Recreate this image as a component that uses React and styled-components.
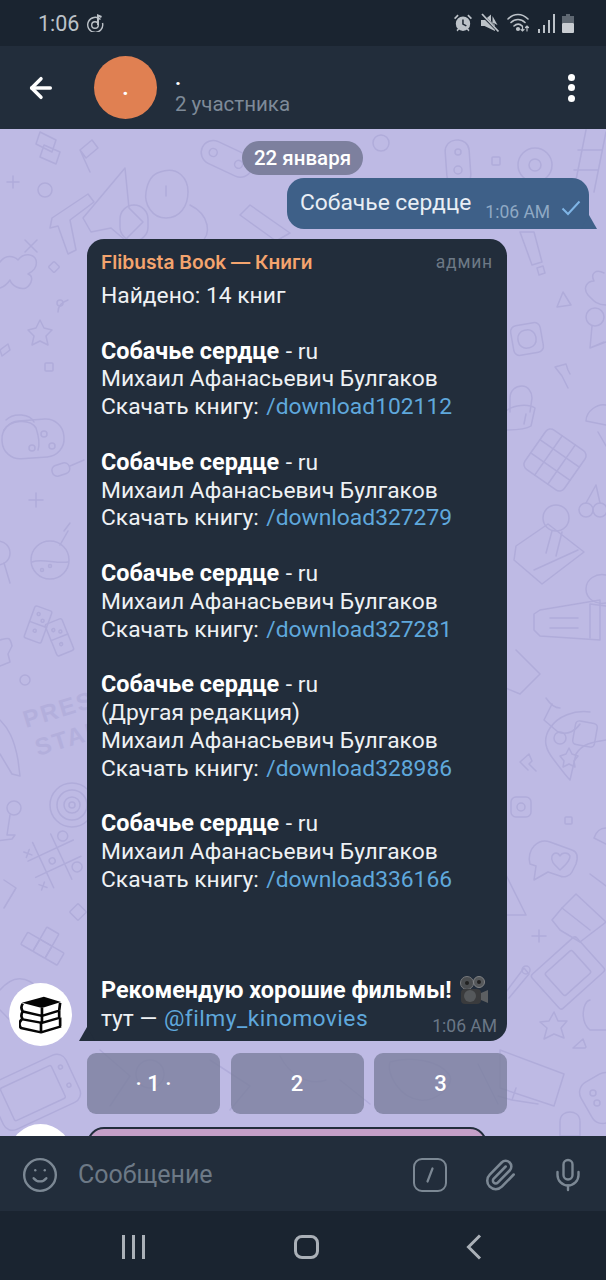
import React from "react";
import styled, { createGlobalStyle } from "styled-components";
import { ArrowLeft, Paperclip, Mic, Smile } from "lucide-react";

const GlobalStyle = createGlobalStyle`
  html, body {
    margin: 0;
    padding: 0;
    background: #bebae4;
    font-family: Roboto, "Noto Sans", sans-serif;
  }
`;

const results = [
  { id: "102112" },
  { id: "327279" },
  { id: "327281" },
  { id: "328986", note: "(Другая редакция)" },
  { id: "336166" },
];

const Doodles = () => (
  <DoodleSvg viewBox="0 129 606 1007" fill="none" stroke="#b0acda" strokeWidth="1.5" strokeLinejoin="round" strokeLinecap="round">
    {/* top band */}
    <g transform="rotate(25 225 158)">
      <rect x="200" y="146" width="54" height="24" rx="12" />
      <circle cx="212" cy="158" r="4" /><circle cx="240" cy="158" r="4" />
    </g>
    <circle cx="381" cy="143" r="8" />
    <rect x="446" y="140" width="24" height="46" rx="11" transform="rotate(-4 458 163)" />
    <circle cx="458" cy="152" r="3" /><circle cx="458" cy="170" r="4" />
    <rect x="492" y="157" width="8" height="8" rx="1" />
    <circle cx="535" cy="165" r="17" /><circle cx="535" cy="165" r="6" />
    <path d="M520 180l-12 12M586 130l-12 60M606 132l-12 60" />
    <path d="M578 150h24M574 170h24" />
    <path d="M40 132l16 8-4 12-16-8zM44 145l-4 12 16 7 4-12z" />
    <path d="M80 150l12-10 6 8-12 10zM80 150l10 22" />
    <path d="M13 176v12M7 182h12" />
    <circle cx="45" cy="190" r="7" />
    <path d="M52 218l36-24 6 8-24 18 6 30-8 4-10-28-8 2z" />
    <path d="M125 168l-42 50 8 14 20-4 14 12 18-18-14-14z" />
    <path d="M160 172c18-6 28 6 28 20s-8 26-22 26-22-14-20-26 6-18 14-20zM166 186v10" />
    <path d="M190 205c20 10 22 30 10 38" />
    <rect x="120" y="205" width="28" height="36" rx="14" />
    <path d="M250 205l40 28-14 8-36-26z" />
    {/* left margin */}
    <path d="M25 240l12 12M37 240l-12 12" />
    <rect x="50" y="263" width="8" height="8" rx="1" transform="rotate(45 54 267)" />
    <path d="M0 262c6-8 14-6 18-2 6-8 16-6 18 0 2 8-4 12-8 14 6 2 4 10-2 14-6 2-14-2-16-8-4 6-10 8-10 8" />
    <path d="M68 300c-6 2-10 6-10 12" />
    <circle cx="60" cy="303" r="3" />
    <path d="M40 320l4 8 8 2-6 6 2 9-8-4-8 4 2-9-6-6 8-2z" />
    <rect x="45" y="363" width="8" height="8" rx="1" />
    <path d="M0 350l8-6 2 6-8 6z" />
    <path d="M4 430c6-10 26-12 32-2 2 6 4 16 2 22M6 420c8-8 24-6 28 2" />
    <rect x="2" y="420" width="62" height="38" rx="18" transform="rotate(-4 32 439)" />
    <circle cx="44" cy="434" r="3" /><circle cx="52" cy="446" r="3" /><circle cx="32" cy="448" r="3" />
    <rect x="52" y="464" width="18" height="11" rx="5" transform="rotate(-18 61 470)" />
    <path d="M70 466l14-6M36 493v14M29 500h14" />
    <circle cx="50" cy="560" r="19" />
    <path d="M60 545l8-14M64 531l6-8M32 562c10-4 24 2 36 0" />
    <circle cx="42" cy="570" r="1.500" /><circle cx="50" cy="566" r="1.500" />
    <circle cx="-2" cy="553" r="12" />
    <path d="M4 563l6 20" />
    <g transform="rotate(20 40 622)">
      <rect x="30" y="608" width="18" height="34" rx="2" />
      <path d="M30 625h18" />
      <circle cx="36" cy="615" r="1.500" /><circle cx="42" cy="620" r="1.500" /><circle cx="38" cy="632" r="1.500" />
    </g>
    <g transform="rotate(-22 60 636)">
      <rect x="50" y="620" width="18" height="34" rx="2" />
      <path d="M50 637h18" />
      <circle cx="56" cy="628" r="1.500" /><circle cx="62" cy="632" r="1.500" /><circle cx="58" cy="644" r="1.500" />
    </g>
    <path d="M0 640c8-2 10-4 12 6l-4 8 2 8-10 4" />
    <circle cx="25" cy="680" r="5" />
    <path d="M0 720c8 8 14 18 18 40l2 16-8-2-12-20" />
    <PressText x="26" y="728" transform="rotate(-17 26 728)">PRESS</PressText>
    <PressText x="38" y="756" transform="rotate(-17 38 756)">START</PressText>
    <circle cx="72" cy="805" r="22" /><circle cx="72" cy="805" r="15" /><circle cx="72" cy="805" r="8" /><circle cx="72" cy="805" r="3" />
    <circle cx="14" cy="808" r="7" />
    <path d="M10 815l-3 20h8l-3 4-16 2" />
    <g transform="rotate(-25 54 860)">
      <path d="M42 835v50M62 835v50M30 850h50M30 868h50" />
      <circle cx="72" cy="842" r="5" /><circle cx="52" cy="860" r="3" /><circle cx="72" cy="876" r="5" />
      <path d="M30 840l6 6M36 840l-6 6M30 876l6 6M36 876l-6 6" />
    </g>
    <rect x="72" y="906" width="12" height="12" rx="1" transform="rotate(-45 78 912)" />
    <path d="M4 880l12 8-12 20" />
    <g transform="rotate(30 48 945)">
      <rect x="38" y="930" width="14" height="14" rx="1" />
      <rect x="38" y="944" width="14" height="14" rx="1" />
      <rect x="24" y="944" width="14" height="14" rx="1" />
      <rect x="52" y="944" width="14" height="14" rx="1" />
    </g>
    <path d="M0 990c12-14 26-16 40 0M0 1010c8 8 14 14 20 22" />
    <g transform="rotate(-25 36 1095)">
      <rect x="-6" y="1066" width="84" height="52" rx="10" />
      <rect x="6" y="1074" width="56" height="36" rx="2" />
      <circle cx="70" cy="1080" r="2" /><circle cx="70" cy="1100" r="2" />
    </g>
    {/* right margin */}
    <path d="M520 232l14 0 8 30-10 3zM537 268l6-2 2 7-6 2z" />
    <path d="M563 292l8 13-14 2z" />
    <rect x="512" y="324" width="30" height="30" rx="6" transform="rotate(-10 527 339)" />
    <rect x="518" y="330" width="18" height="18" rx="8" transform="rotate(-10 527 339)" />
    <path d="M562 376l6 12M562 376l-7-9 11-3 2 6 2 4" />
    <path d="M510 412v-14c0-8 6-12 12-12s10 6 10 12l-2 14M505 412c8-8 24-8 30-4l-4 18c-6 4-22 4-26 4z" />
    <path d="M526 414l-2 10" />
    <g transform="rotate(35 555 460)">
      <rect x="531" y="436" width="48" height="48" rx="6" />
      <path d="M531 452h48M531 468h48M547 436v48M563 436v48" />
    </g>
    <circle cx="556" cy="518" r="13" />
    <path d="M552 531l-6 22M562 532l-6 24" />
    <path d="M516 546l32-22 36 28-42 32-28-24zM534 570l44-20" />
    <circle cx="586" cy="510" r="7" /><circle cx="600" cy="510" r="7" /><path d="M586 503l10-18M600 503l-4-18" />
    <path d="M540 610l60-10v40l-60-4-6-6v-16z" />
    <path d="M550 618h28M550 628h28M590 604l16 2M590 604v34" />
    <path d="M606 305c-10 0-14-6-18-10-6-8 0-14 6-14-4-8 2-12 10-8" />
    <circle cx="595" cy="317" r="9" />
    <path d="M592 326l-2 22 14-6M606 342l-16 6" />
    <path d="M606 405c-8-2-20 6-20 16l20 4M598 432l8 14" />
    <path d="M516 650l24 24-20 20-24-10" />
    <path d="M560 708c-6 0-10-4-14-10M606 575c-10-2-20 4-20 14 0 10 10 16 20 14" />
    <path d="M552 704l-8 16 14 12c10 4 18-2 22-8" />
    <path d="M590 712c-16-2-32 4-40 16-8 12-4 22 4 32 6 8 12 16 16 20l6-26c6-10 16-12 30-14" />
    <rect x="574" y="722" width="22" height="24" rx="4" transform="rotate(10 585 734)" />
    <circle cx="560" cy="738" r="6" />
    <path d="M569 748l3 6 6 2-4 5 1 6-6-3-6 3 1-6-4-5 6-2z" />
    <path d="M528 770l-8-8 9-8 3 7-3 3 7 7" />
    <rect x="511" y="797" width="20" height="20" rx="5" /><circle cx="521" cy="807" r="4" />
    <rect x="565" y="817" width="7" height="7" rx="1" />
    <path d="M606 828c-6 0-10 4-12 10l12 6" />
    <path d="M550 842l22 8c6 2 6 8 4 14l-4 8c-2 4-8 6-12 4l-12-4-14 8 2-14-6-2c-2-6 0-14 4-18 4-4 10-6 16-4z" />
    <path d="M560 870c-4-4-10-8-8-14 2-4 6-4 8 0 2-4 8-4 10 0 0 6-6 10-10 14z" />
    <path d="M506 875l20 40h-20" />
    <path d="M532 936l14 0M539 930v12" />
    <path d="M562 908l14-14 30 28-26 20-20-12-8-10z" />
    <path d="M562 908l28 22M590 874l16 12" />
    <g transform="rotate(-42 568 973)">
      <rect x="538" y="950" width="60" height="46" rx="3" />
      <rect x="550" y="958" width="36" height="30" rx="2" />
    </g>
    <path d="M506 992l18-24 5 6-20 24" />
    <circle cx="526" cy="970" r="4" />
    <path d="M554 1012l4 9 9 0-6 7 3 10-10-4-10 5 3-11-7-6 9-1z" />
    <path d="M585 1048l-12 0 10-9 3 8z" />
    <path d="M500 1050l64 24-10 32-54-18zM516 1088l-4 12 26 4M512 1100l-14-4" />
    <rect x="584" y="1075" width="40" height="46" rx="12" transform="rotate(-30 604 1098)" />
    <circle cx="593" cy="1093" r="3" /><circle cx="597" cy="1103" r="3" />
    <path d="M560 1122c0-8 6-10 10-10s10 2 10 10v14h-20z" />
    <path d="M590 1000c-8 2-10 22 0 30h16" />
    {/* behind the keyboard */}
    <circle cx="150" cy="1074" r="14" />
    <path d="M100 1050l30 26-20 30M210 1060l40 26-20 24M280 1056c10 20 30 30 46 24M340 1080l30 24" />
    <path d="M390 1062c20-6 50-2 60 14 4 10-14 26-30 24-20-2-34-26-30-38z" />
    <path d="M478 1064l20 40" />
  </DoodleSvg>
);

const AlarmIcon = () => (
  <svg width="20" height="20" viewBox="0 0 20 20" fill="#bcc2c8">
    <path fillRule="evenodd" d="M10 3.500a7.200 7.200 0 1 1 0 14.400 7.200 7.200 0 0 1 0-14.400zM9.200 6.500v5l3.800 2 .7-1.200-3-1.600V6.500z" />
    <path d="M1 5l3.500-3.500 1.200 1.200L2.200 6.200zM19 5l-3.500-3.500-1.200 1.200 3.500 3.500zM3.500 17l2-2 1 1-2 2.500zM16.500 17l-2-2-1 1 2 2.500z" />
  </svg>
);

const MuteIcon = () => (
  <svg width="20" height="20" viewBox="0 0 20 20" fill="#bcc2c8">
    <path d="M1 7h3.500L11 1.500v6.700L15 12v6L4.500 13H1zM12.500 9.500V3l5 9z" />
    <path d="M1.500 1.500l17 17" stroke="#1a2430" strokeWidth="2.500" />
    <path d="M2 1l16.500 17.500" stroke="#bcc2c8" strokeWidth="1.800" />
  </svg>
);

const WifiIcon = () => (
  <svg width="24" height="20" viewBox="0 0 24 20" fill="none" stroke="#bcc2c8" strokeWidth="1.600" strokeLinecap="round">
    <path d="M1 6c6-6 14-6 20 0M4 9.500c4-4 10-4 14 0M7 13c2.500-2.500 6-2.500 8 0" />
    <circle cx="11" cy="16" r="1.300" fill="#bcc2c8" />
    <path d="M15.500 13v5M14 16.500l1.500 1.500 1.500-1.500M20 18v-5M18.500 14.500L20 13l1.500 1.500" strokeWidth="1.200" />
  </svg>
);

const SignalIcon = () => (
  <svg width="17" height="19" viewBox="0 0 17 19" fill="#bcc2c8">
    <rect x="0" y="15" width="2" height="4" />
    <rect x="5" y="11" width="2" height="8" />
    <rect x="10" y="6" width="2" height="13" />
    <rect x="15" y="0" width="2" height="19" />
  </svg>
);

const BatteryIcon = () => (
  <svg width="12" height="19" viewBox="0 0 12 19">
    <path d="M4 0h4v2h4v7H0V2h4z" fill="#5f6872" />
    <rect x="0" y="9" width="12" height="10" rx="1" fill="#c9cdd2" />
  </svg>
);

const NoteIcon = () => (
  <svg width="18" height="18" viewBox="0 0 18 18" fill="none" stroke="#bcc2c8" strokeWidth="1.400">
    <path d="M14.500 5.500A7.500 7.500 0 1 0 16.500 9" />
    <circle cx="9" cy="11" r="3.300" />
    <path d="M12 11V1.500l3.500 1.500" strokeWidth="2" />
  </svg>
);

const BooksIcon = () => (
  <svg width="44" height="40" viewBox="0 0 46 46" preserveAspectRatio="none">
    <path d="M3 9l23-7 18 6-20 7z" fill="#050505" />
    <g fill="none" stroke="#050505" strokeWidth="2.800" strokeLinejoin="round">
      <path d="M4 10c-2 3-2 6 0 9l20 5 18-6M24 15v9M43 9l-1 9" />
      <path d="M4 19c-2 3-2 6 0 9l20 4 19-6M24 24v8M42 18v8" />
      <path d="M3 28c-3 3-3 7-1 10l21 5 21-7M23 32v11M43 26v10" />
    </g>
  </svg>
);

const MovieCameraIcon = () => (
  <svg width="30" height="29" viewBox="0 0 30 29">
    <circle cx="8" cy="7" r="6.500" fill="#4a4d50" stroke="#77797c" />
    <circle cx="20" cy="6" r="5.500" fill="#55585b" stroke="#808285" />
    <circle cx="8" cy="7" r="2" fill="#222" />
    <circle cx="20" cy="6" r="2" fill="#222" />
    <rect x="2" y="13" width="20" height="15" rx="4" fill="#3a3b3d" />
    <circle cx="11" cy="20" r="6" fill="#55585b" />
    <path d="M22 17l7-3v13l-7-3z" fill="#5c5f62" />
  </svg>
);

const SlashBox = () => (
  <SlashFrame>
    <svg width="10" height="16" viewBox="0 0 10 16" fill="none" stroke="#7c8894" strokeWidth="2.200" strokeLinecap="round">
      <path d="M7.500 1.500l-5 13" />
    </svg>
  </SlashFrame>
);

const MessageResult = ({ id, note }) => (
  <Block>
    <Line>
      <b>Собачье сердце</b> - ru
    </Line>
    {note && <Line>{note}</Line>}
    <Line>Михаил Афанасьевич Булгаков</Line>
    <Line>
      Скачать книгу: <DownloadLink>/download{id}</DownloadLink>
    </Line>
  </Block>
);

const App = () => (
  <Page>
    <GlobalStyle />
    <StatusBar>
      <StatusLeft>
        <span>1:06</span>
        <NoteIcon />
      </StatusLeft>
      <StatusRight>
        <AlarmIcon />
        <MuteIcon />
        <WifiIcon />
        <SignalIcon />
        <BatteryIcon />
      </StatusRight>
    </StatusBar>

    <Header>
      <ArrowLeft size={32} color="#ffffff" strokeWidth={2.6} />
      <ChatAvatar>.</ChatAvatar>
      <HeaderText>
        <ChatTitle>.</ChatTitle>
        <ChatSub>2 участника</ChatSub>
      </HeaderText>
      <MenuDots>
        <i />
        <i />
        <i />
      </MenuDots>
    </Header>

    <Chat>
      <Doodles />
      <DatePill>22 января</DatePill>
      <OutRow>
        <OutBubble>
          <OutText>Собачье сердце</OutText>
          <OutTime>1:06 AM</OutTime>
          <svg width="20" height="16" viewBox="0 0 20 16" fill="none" stroke="#7fb5e6" strokeWidth="2">
            <path d="M1.500 8.500l5.500 5.500L18.500 1.500" />
          </svg>
        </OutBubble>
      </OutRow>
      <InRow>
        <Avatar>
          <BooksIcon />
        </Avatar>
        <InBubble>
          <BubbleHead>
            <Sender>Flibusta Book — Книги</Sender>
            <Role>админ</Role>
          </BubbleHead>
          <Block>
            <Line>Найдено: 14 книг</Line>
          </Block>
          {results.map((r) => (
            <MessageResult key={r.id} id={r.id} note={r.note} />
          ))}
          <Promo>
            <Line>
              <b>Рекомендую хорошие фильмы!</b>
              <MovieCameraIcon />
            </Line>
            <Line>
              тут — <ChannelLink>@filmy_kinomovies</ChannelLink>
            </Line>
            <InTime>1:06 AM</InTime>
          </Promo>
        </InBubble>
      </InRow>
      <Keyboard>
        <KeyButton>· 1 ·</KeyButton>
        <KeyButton>2</KeyButton>
        <KeyButton>3</KeyButton>
      </Keyboard>
      <InRow>
        <Avatar />
        <PinkBubble />
      </InRow>
    </Chat>

    <Composer>
      <Smile size={38} color="#7c8894" strokeWidth={1.5} />
      <Placeholder>Сообщение</Placeholder>
      <SlashBox />
      <Paperclip size={34} color="#7c8894" strokeWidth={1.8} />
      <MicSlot>
        <Mic size={36} color="#7c8894" strokeWidth={1.6} />
      </MicSlot>
    </Composer>

    <NavBar>
      <svg width="26" height="24" viewBox="0 0 26 24" fill="#aab0b7">
        <rect x="1" y="0" width="3" height="24" />
        <rect x="11" y="0" width="3" height="24" />
        <rect x="21" y="0" width="3" height="24" />
      </svg>
      <HomeKey />
      <svg width="16" height="26" viewBox="0 0 16 26" fill="none" stroke="#aab0b7" strokeWidth="3">
        <path d="M14 1.500L2.500 13 14 24.500" />
      </svg>
    </NavBar>
  </Page>
);

export default App;

const Page = styled.div`
  width: 606px;
  height: 1280px;
  display: flex;
  flex-direction: column;
  overflow: hidden;
  background: #bebae4;
`;

const StatusBar = styled.div`
  height: 46px;
  flex: none;
  background: #1a2430;
  display: flex;
  align-items: center;
  justify-content: space-between;
  padding: 0 32px 0 38px;
`;

const StatusLeft = styled.div`
  display: flex;
  align-items: center;
  gap: 7px;
  color: #bcc2c8;
  font-size: 21.5px;
`;

const StatusRight = styled.div`
  display: flex;
  align-items: center;
  gap: 7px;
`;

const Header = styled.div`
  height: 83px;
  flex: none;
  background: #222d3b;
  display: flex;
  align-items: center;
  padding: 0 31px 0 25px;
`;

const ChatAvatar = styled.div`
  width: 63px;
  height: 63px;
  margin-left: 37px;
  border-radius: 50%;
  background: #e08052;
  color: #ffffff;
  font-size: 22px;
  font-weight: 700;
  display: flex;
  align-items: center;
  justify-content: center;
`;

const HeaderText = styled.div`
  flex: 1;
  margin-left: 18px;
  display: flex;
  flex-direction: column;
  padding-top: 6px;
`;

const ChatTitle = styled.div`
  color: #ffffff;
  font-size: 21px;
  font-weight: 700;
  line-height: 26px;
`;

const ChatSub = styled.div`
  color: #7e8a98;
  font-size: 20.5px;
  line-height: 26px;
`;

const MenuDots = styled.div`
  display: flex;
  flex-direction: column;
  gap: 3.5px;

  i {
    display: block;
    width: 7px;
    height: 7px;
    border-radius: 50%;
    background: #ffffff;
  }
`;

const Chat = styled.div`
  height: 1007px;
  flex: none;
  position: relative;
  overflow: hidden;
  display: flex;
  flex-direction: column;
  padding-top: 12px;
  box-sizing: border-box;

  > * {
    flex: none;
  }
`;

const DoodleSvg = styled.svg`
  position: absolute;
  inset: 0;
  width: 606px;
  height: 1007px;
`;

const PressText = styled.text`
  font-family: "Liberation Sans", sans-serif;
  font-size: 24px;
  font-weight: 700;
  letter-spacing: 2px;
  fill: #b3afdc;
  stroke: none;
`;

const DatePill = styled.div`
  position: relative;
  align-self: flex-start;
  margin-left: 242px;
  width: 121px;
  height: 34px;
  border-radius: 17px;
  background: #7d809e;
  color: #ffffff;
  font-size: 20.5px;
  font-weight: 500;
  display: flex;
  align-items: center;
  justify-content: center;
`;

const OutRow = styled.div`
  position: relative;
  display: flex;
  justify-content: flex-end;
  padding-right: 17px;
  margin-top: 3px;
`;

const OutBubble = styled.div`
  position: relative;
  width: 302px;
  height: 51px;
  box-sizing: border-box;
  padding: 0 10px 0 13px;
  border-radius: 17px 17px 4px 17px;
  background: #3e6088;
  display: flex;
  align-items: center;
  white-space: nowrap;

  &::after {
    content: "";
    position: absolute;
    right: -8px;
    bottom: 0;
    width: 16px;
    height: 14px;
    background: #3e6088;
    clip-path: polygon(50% 0, 100% 100%, 0 100%);
  }

  svg {
    flex: none;
    margin: 9px 0 0 11px;
  }
`;

const OutText = styled.span`
  color: #e8eef5;
  font-size: 22.8px;
  margin-top: -2px;
`;

const OutTime = styled.span`
  color: #8fa9c4;
  font-size: 17.5px;
  margin: 17px 0 0 14px;
`;

const InRow = styled.div`
  position: relative;
  display: flex;
  align-items: flex-end;
  padding-left: 9px;
  margin-top: 10px;
`;

const Avatar = styled.div`
  width: 63px;
  height: 63px;
  flex: none;
  margin-bottom: -5px;
  border-radius: 50%;
  background: #ffffff;
  display: flex;
  align-items: center;
  justify-content: center;
`;

const InBubble = styled.div`
  position: relative;
  width: 420px;
  height: 802px;
  box-sizing: border-box;
  margin-left: 15px;
  padding: 9px 14px 0;
  border-radius: 17px 17px 17px 4px;
  background: #222d3b;
  color: #eef1f4;
  font-size: 22.8px;

  &::after {
    content: "";
    position: absolute;
    left: -8px;
    bottom: 0;
    width: 16px;
    height: 14px;
    background: #222d3b;
    clip-path: polygon(50% 0, 100% 100%, 0 100%);
  }

  b {
    font-weight: 700;
    font-size: 23.4px;
    margin-right: 1px;
    color: #ffffff;
  }
`;

const BubbleHead = styled.div`
  display: flex;
  align-items: center;
  justify-content: space-between;
  height: 28px;
  margin-bottom: 6px;
`;

const Sender = styled.span`
  color: #f4a46e;
  font-size: 19.2px;
  font-weight: 600;
  font-family: Inter, Roboto, sans-serif;
`;

const Role = styled.span`
  color: #6d7986;
  font-size: 17.5px;
  letter-spacing: 0.8px;
`;

const Block = styled.div`
  margin-bottom: 27.8px;
`;

const Line = styled.div`
  height: 27.8px;
  line-height: 27.8px;
  white-space: pre;
  display: flex;
  align-items: center;

  svg {
    margin-left: 6px;
    flex: none;
  }
`;

const LinkText = styled.span`
  color: #5fa8dc;
`;

const DownloadLink = styled(LinkText)`
  margin-left: 2px;
`;

const ChannelLink = styled(LinkText)`
  margin-left: 1px;
  letter-spacing: 0.45px;
`;

const Promo = styled.div`
  position: relative;
  margin-top: 83.4px;
`;

const InTime = styled.span`
  position: absolute;
  right: -4px;
  bottom: -3px;
  color: #6a7786;
  font-size: 17.5px;
`;

const Keyboard = styled.div`
  position: relative;
  width: 420px;
  margin: 12px 0 0 87px;
  display: grid;
  grid-template-columns: repeat(3, 1fr);
  gap: 10.5px;
`;

const KeyButton = styled.div`
  height: 61px;
  border-radius: 9px;
  background: #7c7f9ecc;
  color: #ffffff;
  font-size: 22px;
  font-weight: 500;
  display: flex;
  align-items: center;
  justify-content: center;
`;

const PinkBubble = styled.div`
  width: 400px;
  height: 60px;
  box-sizing: border-box;
  margin: 0 0 -5px 15px;
  border: 2.5px solid #222d3b;
  border-radius: 17px;
  background: #c49fc7;
`;

const Composer = styled.div`
  position: relative;
  height: 73px;
  flex: none;
  background: #222d3b;
  display: flex;
  align-items: center;
  padding: 2px 20px 0 21px;

  svg {
    flex: none;
  }
`;

const Placeholder = styled.div`
  flex: 1;
  margin-left: 19px;
  color: #6d7986;
  font-size: 25px;
`;

const SlashFrame = styled.div`
  width: 34px;
  height: 34px;
  box-sizing: border-box;
  margin-right: 36px;
  border: 2.5px solid #7c8894;
  border-radius: 9px;
  display: flex;
  align-items: center;
  justify-content: center;
`;

const MicSlot = styled.div`
  margin-left: 33px;
  display: flex;
`;

const NavBar = styled.div`
  height: 71px;
  flex: none;
  background: #1a2430;
  display: flex;
  align-items: center;
  justify-content: space-between;
  padding: 0 124px 3px 121px;
`;

const HomeKey = styled.div`
  width: 25px;
  height: 24px;
  box-sizing: border-box;
  border: 3px solid #aab0b7;
  border-radius: 8px;
`;
